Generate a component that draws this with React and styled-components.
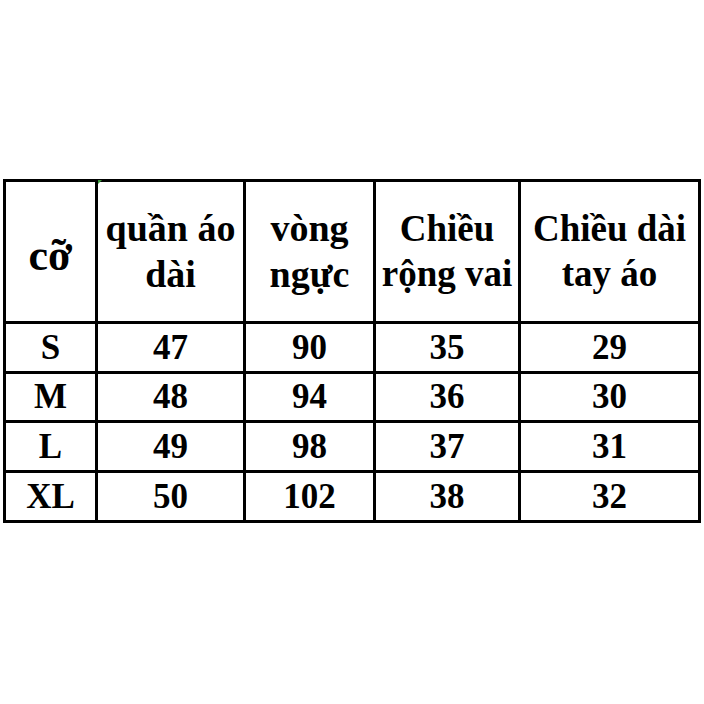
import React from "react";
import styled, { createGlobalStyle } from "styled-components";

const GlobalStyle = createGlobalStyle`
  html, body {
    margin: 0;
    padding: 0;
    background: #fff;
  }
`;

const Page = styled.div`
  width: 704px;
  height: 704px;
  padding-top: 179px;
  padding-left: 3px;
  box-sizing: border-box;
`;

const Table = styled.div`
  display: grid;
  grid-template-columns: 89px 145px 127px 142px 177px;
  grid-template-rows: 139px 47px 46px 47px 47px;
  gap: 3px;
  padding: 3px;
  background: #000;
  width: max-content;
  position: relative;
`;

const Cell = styled.div`
  background: #fff;
  display: flex;
  align-items: center;
  justify-content: center;
  text-align: center;
  font-family: "Liberation Serif", "Times New Roman", serif;
  font-weight: 700;
  color: #000;
  font-size: ${(p) => p.$size}px;
  line-height: 1.2;
  white-space: pre-line;
  padding-top: ${(p) => p.$pt || 0}px;
`;

// small green corner marker left over from the spreadsheet
const Mark = styled.div`
  position: absolute;
  left: 95px;
  top: 1px;
  width: 0;
  height: 0;
  border-top: 4px solid #3a9a3a;
  border-right: 4px solid transparent;
`;

const headers = [
  { text: "cỡ", size: 44, pt: 10 },
  { text: "quần áo\ndài", size: 38 },
  { text: "vòng\nngực", size: 38 },
  { text: "Chiều\nrộng vai", size: 37 },
  { text: "Chiều dài\ntay áo", size: 37 },
];

const rows = [
  ["S", "47", "90", "35", "29"],
  ["M", "48", "94", "36", "30"],
  ["L", "49", "98", "37", "31"],
  ["XL", "50", "102", "38", "32"],
];

export default function App() {
  return (
    <>
      <GlobalStyle />
      <Page>
        <Table>
          <Mark />
          {headers.map((h, i) => (
            <Cell key={i} $size={h.size} $pt={h.pt}>
              {h.text}
            </Cell>
          ))}
          {rows.map((r, i) =>
            r.map((v, j) => (
              <Cell key={i + "-" + j} $size={35}>
                {v}
              </Cell>
            ))
          )}
        </Table>
      </Page>
    </>
  );
}
